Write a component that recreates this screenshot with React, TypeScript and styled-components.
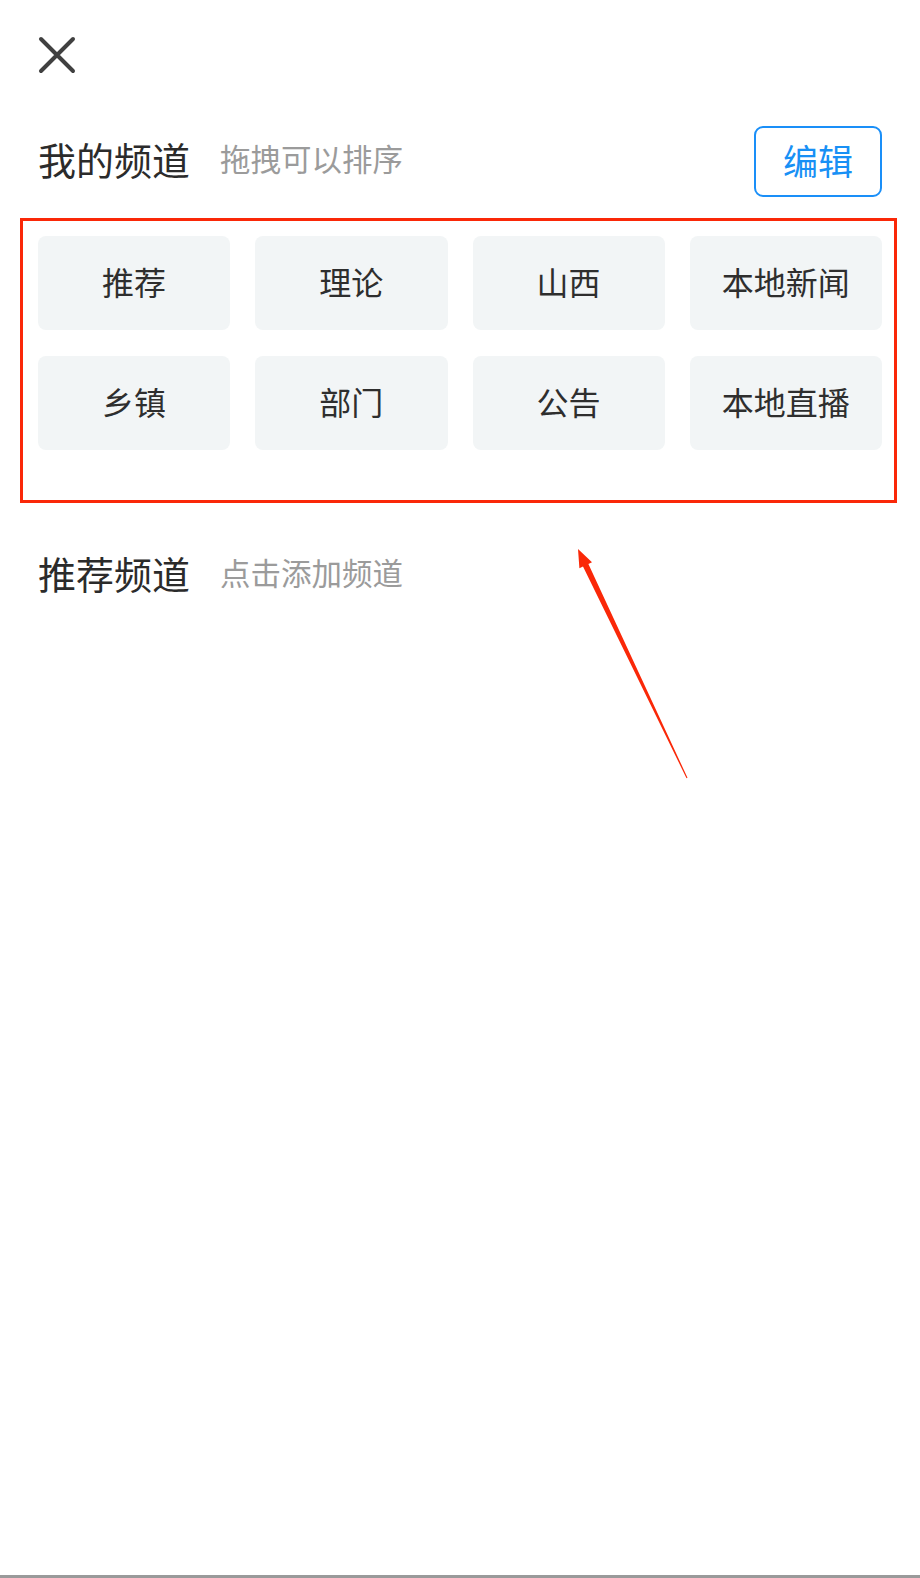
import styled, { createGlobalStyle } from "styled-components";

const GlobalStyle = createGlobalStyle`
  html, body {
    margin: 0;
    padding: 0;
    background: #ffffff;
  }
  body {
    font-family: "Noto Sans CJK SC", "Noto Sans", sans-serif;
  }
`;

const Page = styled.div`
  position: relative;
  box-sizing: border-box;
  min-height: 1578px;
  background: #ffffff;
  border-bottom: 3px solid #9a9a9a;
`;

const TopBar = styled.div`
  padding: 35px 0 0 37px;
  height: 40px;
`;

const CloseButton = styled.button`
  display: block;
  width: 40px;
  height: 40px;
  padding: 0;
  border: none;
  background: transparent;
  cursor: pointer;
`;

const SectionHeader = styled.div<{ $top: number }>`
  display: flex;
  align-items: center;
  justify-content: space-between;
  height: 71px;
  margin-top: ${({ $top }) => $top}px;
  padding: 0 38px;
`;

const TitleGroup = styled.div`
  display: flex;
  align-items: center;
  padding-bottom: 6px;
`;

const Title = styled.h2`
  margin: 0;
  font-size: 38px;
  line-height: 1;
  font-weight: 400;
  color: #2b2b2b;
`;

const Hint = styled.span`
  margin-left: 30px;
  font-size: 30.5px;
  line-height: 1;
  color: #9b9b9b;
`;

const EditButton = styled.button`
  box-sizing: border-box;
  width: 128px;
  height: 71px;
  border: 2px solid #1a8ff8;
  border-radius: 9px;
  background: #ffffff;
  color: #1890f5;
  font-family: inherit;
  font-size: 35px;
  line-height: 1;
  padding: 0 0 5px;
  cursor: pointer;
`;

// red annotation frame round the channel grid
const Highlight = styled.div`
  margin: 21px 23px 0 20px;
  border: 3px solid #fa2808;
  padding: 15px 12px 50px 15px;
`;

const ChannelGrid = styled.div`
  display: grid;
  grid-template-columns: repeat(4, 1fr);
  gap: 26px 25px;
`;

const Tile = styled.div`
  box-sizing: border-box;
  display: flex;
  align-items: center;
  justify-content: center;
  height: 94px;
  padding-bottom: 4px;
  border-radius: 8px;
  background: #f2f5f6;
  font-size: 32px;
  color: #2e2e2e;
`;

const Arrow = styled.svg`
  position: absolute;
  left: 570px;
  top: 540px;
  width: 125px;
  height: 245px;
  pointer-events: none;
`;

const myChannels = ["推荐", "理论", "山西", "本地新闻", "乡镇", "部门", "公告", "本地直播"];

const App = () => {
  return (
    <>
      <GlobalStyle />
      <Page>
        <TopBar>
          <CloseButton aria-label="关闭">
            <svg width="40" height="40" viewBox="0 0 40 40">
              <path
                d="M4 4 L36 36 M36 4 L4 36"
                stroke="#404040"
                strokeWidth="4"
                strokeLinecap="round"
                fill="none"
              />
            </svg>
          </CloseButton>
        </TopBar>

        <SectionHeader $top={51}>
          <TitleGroup>
            <Title>我的频道</Title>
            <Hint>拖拽可以排序</Hint>
          </TitleGroup>
          <EditButton>编辑</EditButton>
        </SectionHeader>

        <Highlight>
          <ChannelGrid>
            {myChannels.map((name) => (
              <Tile key={name}>{name}</Tile>
            ))}
          </ChannelGrid>
        </Highlight>

        <SectionHeader $top={37}>
          <TitleGroup>
            <Title>推荐频道</Title>
            <Hint>点击添加频道</Hint>
          </TitleGroup>
        </SectionHeader>

        <Arrow viewBox="0 0 125 245">
          <polygon
            points="8,9 22,22.3 18.4,24 117.5,237.8 116.5,238.2 13,26.6 9.4,28.3"
            fill="#fa2808"
          />
        </Arrow>
      </Page>
    </>
  );
};

export default App;
